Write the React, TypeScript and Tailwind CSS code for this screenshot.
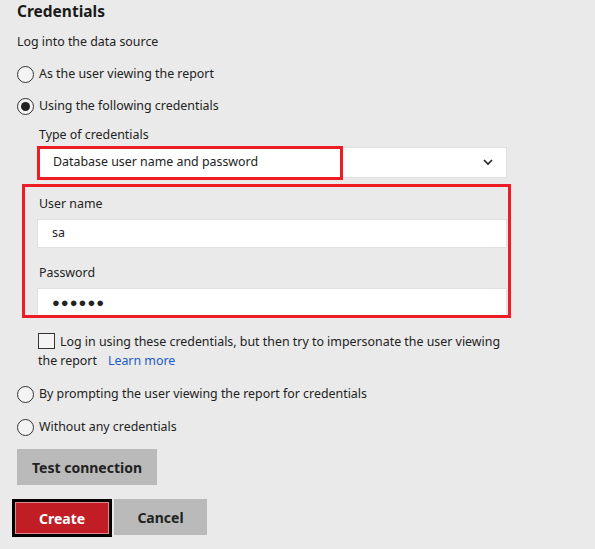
import React from 'react';

function Radio({ checked, label, className }: { checked?: boolean; label: string; className: string }) {
    return (
        <div className={'flex h-[20px] items-center ' + className}>
            <span className="flex h-[17px] w-[17px] items-center justify-center rounded-full border-[1.5px] border-[#333] bg-[#f4f4f4]">
                {checked && <span className="h-[9px] w-[9px] rounded-full bg-[#222]" />}
            </span>
            <span className="ml-[5px] text-[12.4px] text-[#222]">{label}</span>
        </div>
    );
}

export default function App() {
    return (
        <div className="min-h-screen bg-[#eaeaea] pl-[17px] font-['Noto_Sans',sans-serif] text-[#222]">
            <h2 className="h-[23px] text-[15.5px] font-bold leading-[22px] text-[#1a1a1a]">Credentials</h2>
            <p className="mt-[9px] h-[20px] text-[12.4px] leading-[20px]">Log into the data source</p>

            <Radio className="mt-[12px]" label="As the user viewing the report" />
            <Radio className="mt-[12px]" checked label="Using the following credentials" />

            <div className="ml-[20px] w-[470px]">
                <p className="mt-[9px] h-[20px] pl-[2px] text-[12.4px] leading-[20px]">Type of credentials</p>

                {/* Dropdown */}
                <div className="relative mt-[2px]">
                    <div className="flex h-[31px] items-center justify-between border border-[#e0e0e0] bg-white pl-[15px] pr-[13px] text-[12.4px]">
                        <span>Database user name and password</span>
                        <svg width="10" height="7" viewBox="0 0 10 7" className="text-[#222]">
                            <polyline points="1,1 5,5 9,1" fill="none" stroke="currentColor" strokeWidth="1.6" />
                        </svg>
                    </div>
                    <div className="pointer-events-none absolute left-0 top-[-1px] h-[34px] w-[306px] border-[3px] border-[#ee1c25]" />
                </div>

                {/* User name / password */}
                <div className="relative mt-[16px]">
                    <p className="h-[20px] pl-[2px] text-[12.4px] leading-[20px]">User name</p>
                    <div className="mt-[5px] flex h-[29px] items-center border border-[#e0e0e0] bg-white pl-[14px] text-[12.4px]">sa</div>
                    <p className="mt-[15px] h-[20px] pl-[2px] text-[12.4px] leading-[20px]">Password</p>
                    <div className="mt-[5px] flex h-[29px] items-center border border-[#e0e0e0] bg-white pl-[14px] text-[13px] tracking-[1px]">●●●●●●</div>
                    <div className="pointer-events-none absolute left-[-15px] right-[-4px] top-[-10px] bottom-[-1px] border-[3px] border-[#ee1c25]" />
                </div>

                {/* Impersonate checkbox */}
                <p className="mt-[15px] pl-[1px] text-[12.4px] leading-[19px]">
                    <span className="mr-[5px] inline-block h-[16px] w-[17px] border-[1.5px] border-[#333] bg-[#f4f4f4] align-[-3px]" />
                    Log in using these credentials, but then try to impersonate the user viewing the report
                    <a className="ml-[11px] text-[#1a5bc4]">Learn more</a>
                </p>
            </div>

            <Radio className="mt-[14px]" label="By prompting the user viewing the report for credentials" />
            <Radio className="mt-[13px]" label="Without any credentials" />

            <button className="mt-[12px] block h-[36px] w-[140px] bg-[#bababa] text-[14px] font-bold text-[#222]">
                Test connection
            </button>

            <div className="mt-[14px] flex items-start">
                <button className="ml-[-5px] h-[38px] w-[100px] border-[3px] border-black bg-[#c01e24] text-[14px] font-bold text-white outline outline-1 outline-[#e0888a] -outline-offset-[4px]">
                    Create
                </button>
                <button className="ml-[2px] h-[36px] w-[93px] bg-[#bababa] text-[14px] font-bold text-[#222]">
                    Cancel
                </button>
            </div>
        </div>
    );
}
